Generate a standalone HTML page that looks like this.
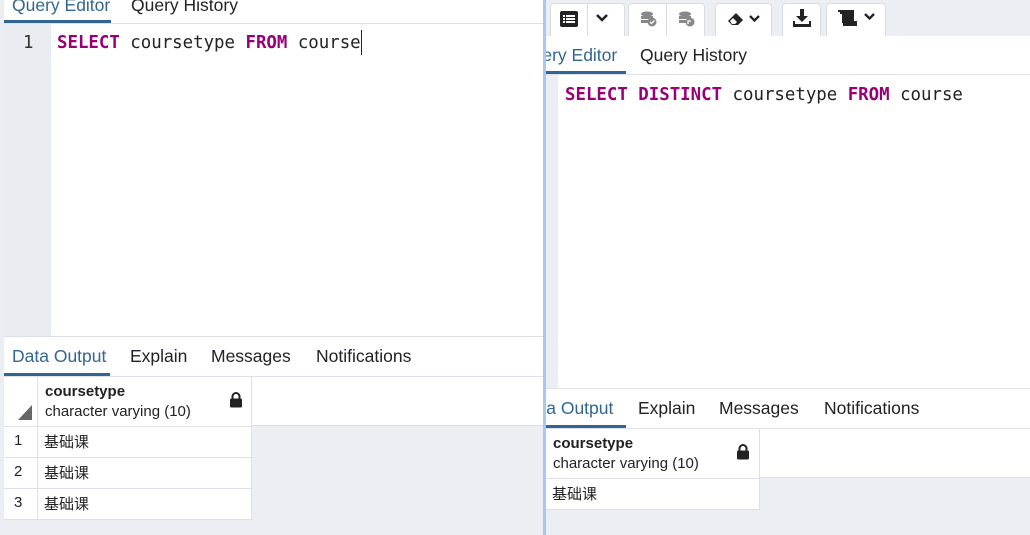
<!DOCTYPE html><html><head><meta charset="utf-8"><style>
*{margin:0;padding:0;box-sizing:border-box}
body{width:1030px;height:535px;overflow:hidden;background:#ebeef3;font-family:"Liberation Sans","Noto Sans CJK SC",sans-serif;position:relative;color:#222}
.a{position:absolute}
.tab{position:absolute;font-size:17.5px;color:#222;white-space:nowrap}
.act{color:#326690}
.mono{font-family:"DejaVu Sans Mono","Liberation Mono",monospace;font-size:17.4px;white-space:pre}
.kw{color:#990077;font-weight:bold}
.btn{position:absolute;top:3px;height:33px;background:#fff;border:1px solid #d8dde4;border-bottom:none;border-radius:4px 4px 0 0}
.cell{position:absolute;background:#fff;border-right:1px solid #dde0e6;border-bottom:1px solid #dde0e6;font-size:15px}
</style></head><body>
<!-- right window -->
<div class="a" style="left:546px;top:0;width:484px;height:36px;background:#ebeef3"></div>
<div class="btn" style="left:550px;width:75px"></div>
<div class="a" style="left:587px;top:3px;width:1px;height:33px;background:#d8dde4"></div>
<svg class="a" style="left:560px;top:11px" width="18" height="16"><rect x="0" y="0" width="18" height="16" rx="2" fill="#222"/><g fill="#fff"><rect x="3" y="4" width="2" height="2"/><rect x="3" y="7" width="2" height="2"/><rect x="3" y="10" width="2" height="2"/><rect x="6" y="4" width="9" height="2"/><rect x="6" y="7" width="9" height="2"/><rect x="6" y="10" width="9" height="2"/></g></svg>
<svg class="a" style="left:595px;top:13px" width="14" height="10"><path d="M2 2l5 5 5-5" stroke="#222" stroke-width="2.5" fill="none"/></svg>
<div class="btn" style="left:628px;width:77px"></div>
<div class="a" style="left:666px;top:3px;width:1px;height:33px;background:#d8dde4"></div>
<svg class="a" style="left:640px;top:11px" width="18" height="16"><ellipse cx="7" cy="3" rx="6" ry="2.5" fill="#888"/><rect x="1" y="5" width="12" height="3" fill="#888"/><rect x="1" y="9" width="9" height="3" fill="#888"/><circle cx="12" cy="11" r="4.5" fill="#888"/><path d="M10 11l1.5 1.5 3-3" stroke="#fff" stroke-width="1.3" fill="none"/></svg>
<svg class="a" style="left:678px;top:11px" width="18" height="16"><ellipse cx="7" cy="3" rx="6" ry="2.5" fill="#888"/><rect x="1" y="5" width="12" height="3" fill="#888"/><rect x="1" y="9" width="9" height="3" fill="#888"/><circle cx="12" cy="11" r="4.5" fill="#888"/><path d="M10 13v-3h3" stroke="#fff" stroke-width="1.3" fill="none"/></svg>
<div class="btn" style="left:715px;width:57px"></div>
<svg class="a" style="left:726px;top:11px" width="36" height="16"><path d="M2 10l8-8 7 7-5 5H6z" fill="#222"/><path d="M4 10l3-3 4 4-2 2H6z" fill="#fff"/><path d="M24 5l4.5 4.5 4.5-4.5" stroke="#222" stroke-width="2.3" fill="none"/></svg>
<div class="btn" style="left:782px;width:39px"></div>
<svg class="a" style="left:792px;top:8px" width="20" height="20"><path d="M8 1h4v7h4l-6 6-6-6h4z" fill="#222"/><path d="M1 13v6h18v-6h-2v3H3v-3z" fill="#222"/></svg>
<div class="btn" style="left:826px;width:60px"></div>
<svg class="a" style="left:837px;top:9px" width="42" height="18"><path d="M1 1h16v15h-3v-2H5V5H3V3H1z" fill="#222"/><rect x="6" y="12" width="14" height="5" fill="#222"/><path d="M28 5l4.5 4.5 4.5-4.5" stroke="#222" stroke-width="2.3" fill="none"/></svg>
<div class="a" style="left:546px;top:36px;width:484px;height:39px;background:#fff;border-bottom:1px solid #dde0e6"></div>
<div class="tab act" style="left:519px;top:45px">Query Editor</div>
<div class="tab" style="left:640px;top:45px">Query History</div>
<div class="a" style="left:546px;top:71px;width:80px;height:3px;background:#326690"></div>
<div class="a" style="left:546px;top:75px;width:484px;height:313px;background:#fff"></div>
<div class="a" style="left:546px;top:75px;width:12px;height:313px;background:#ebeef3"></div>
<div class="a mono" style="left:565px;top:85px"><span class="kw">SELECT DISTINCT</span> coursetype <span class="kw">FROM</span> course</div>
<div class="a" style="left:546px;top:388px;width:484px;height:41px;background:#fff;border-top:1px solid #dde0e6;border-bottom:1px solid #dde0e6"></div>
<div class="tab act" style="left:519px;top:398px">Data Output</div>
<div class="tab" style="left:638px;top:398px">Explain</div>
<div class="tab" style="left:719px;top:398px">Messages</div>
<div class="tab" style="left:824px;top:398px">Notifications</div>
<div class="a" style="left:546px;top:425px;width:80px;height:3px;background:#326690"></div>
<div class="a" style="left:546px;top:429px;width:484px;height:49px;background:#fff;border-bottom:1px solid #dde0e6"></div>
<div class="cell" style="left:546px;top:429px;width:214px;height:50px"><div style="position:absolute;left:7px;top:6px;font-weight:bold">coursetype</div><div style="position:absolute;left:7px;top:26px">character varying (10)</div>
<svg style="position:absolute;left:190px;top:14px" width="14" height="17"><path d="M3.5 8V5.5a3.5 3.5 0 0 1 7 0V8" stroke="#222" stroke-width="2" fill="none"/><rect x="1" y="7.5" width="12" height="9" rx="1.5" fill="#222"/></svg></div>
<div class="cell" style="left:546px;top:479px;width:214px;height:31px"><div style="position:absolute;left:6px;top:4px">基础课</div></div>
<!-- left window -->
<div class="a" style="left:0;top:0;width:543px;height:535px;background:#ebeef3"></div>
<div class="a" style="left:543px;top:0;width:3px;height:535px;background:#a9c8ef"></div>
<div class="a" style="left:4px;top:0;width:539px;height:24px;background:#fff;border-bottom:1px solid #dde0e6"></div>
<div class="tab act" style="left:12px;top:-5px">Query Editor</div>
<div class="tab" style="left:131px;top:-5px">Query History</div>
<div class="a" style="left:4px;top:20px;width:107px;height:3px;background:#326690"></div>
<div class="a" style="left:4px;top:24px;width:539px;height:313px;background:#fff"></div>
<div class="a" style="left:4px;top:24px;width:47px;height:313px;background:#e9ecf1"></div>
<div class="a mono" style="left:23px;top:33px;color:#333">1</div>
<div class="a mono" style="left:57px;top:33px"><span class="kw">SELECT</span> coursetype <span class="kw">FROM</span> course</div>
<div class="a" style="left:361px;top:30px;width:1px;height:25px;background:#222"></div>
<div class="a" style="left:4px;top:336px;width:539px;height:41px;background:#fff;border-top:1px solid #dde0e6;border-bottom:1px solid #dde0e6"></div>
<div class="tab act" style="left:12px;top:346px">Data Output</div>
<div class="tab" style="left:130px;top:346px">Explain</div>
<div class="tab" style="left:211px;top:346px">Messages</div>
<div class="tab" style="left:316px;top:346px">Notifications</div>
<div class="a" style="left:4px;top:373px;width:106px;height:3px;background:#326690"></div>
<div class="a" style="left:4px;top:377px;width:539px;height:49px;background:#fff;border-bottom:1px solid #dde0e6"></div>
<div class="cell" style="left:4px;top:377px;width:34px;height:50px"><svg style="position:absolute;left:14px;top:28px" width="14" height="15"><path d="M14 0V15H0z" fill="#666"/></svg></div>
<div class="cell" style="left:38px;top:377px;width:214px;height:50px"><div style="position:absolute;left:7px;top:6px;font-weight:bold">coursetype</div><div style="position:absolute;left:7px;top:26px">character varying (10)</div>
<svg style="position:absolute;left:191px;top:14px" width="14" height="17"><path d="M3.5 8V5.5a3.5 3.5 0 0 1 7 0V8" stroke="#222" stroke-width="2" fill="none"/><rect x="1" y="7.5" width="12" height="9" rx="1.5" fill="#222"/></svg></div>
<div class="cell" style="left:4px;top:427px;width:34px;height:31px"><div style="position:absolute;left:10px;top:5px">1</div></div>
<div class="cell" style="left:38px;top:427px;width:214px;height:31px"><div style="position:absolute;left:6px;top:4px">基础课</div></div>
<div class="cell" style="left:4px;top:458px;width:34px;height:31px"><div style="position:absolute;left:10px;top:5px">2</div></div>
<div class="cell" style="left:38px;top:458px;width:214px;height:31px"><div style="position:absolute;left:6px;top:4px">基础课</div></div>
<div class="cell" style="left:4px;top:489px;width:34px;height:31px"><div style="position:absolute;left:10px;top:5px">3</div></div>
<div class="cell" style="left:38px;top:489px;width:214px;height:31px"><div style="position:absolute;left:6px;top:4px">基础课</div></div>
</body></html>
